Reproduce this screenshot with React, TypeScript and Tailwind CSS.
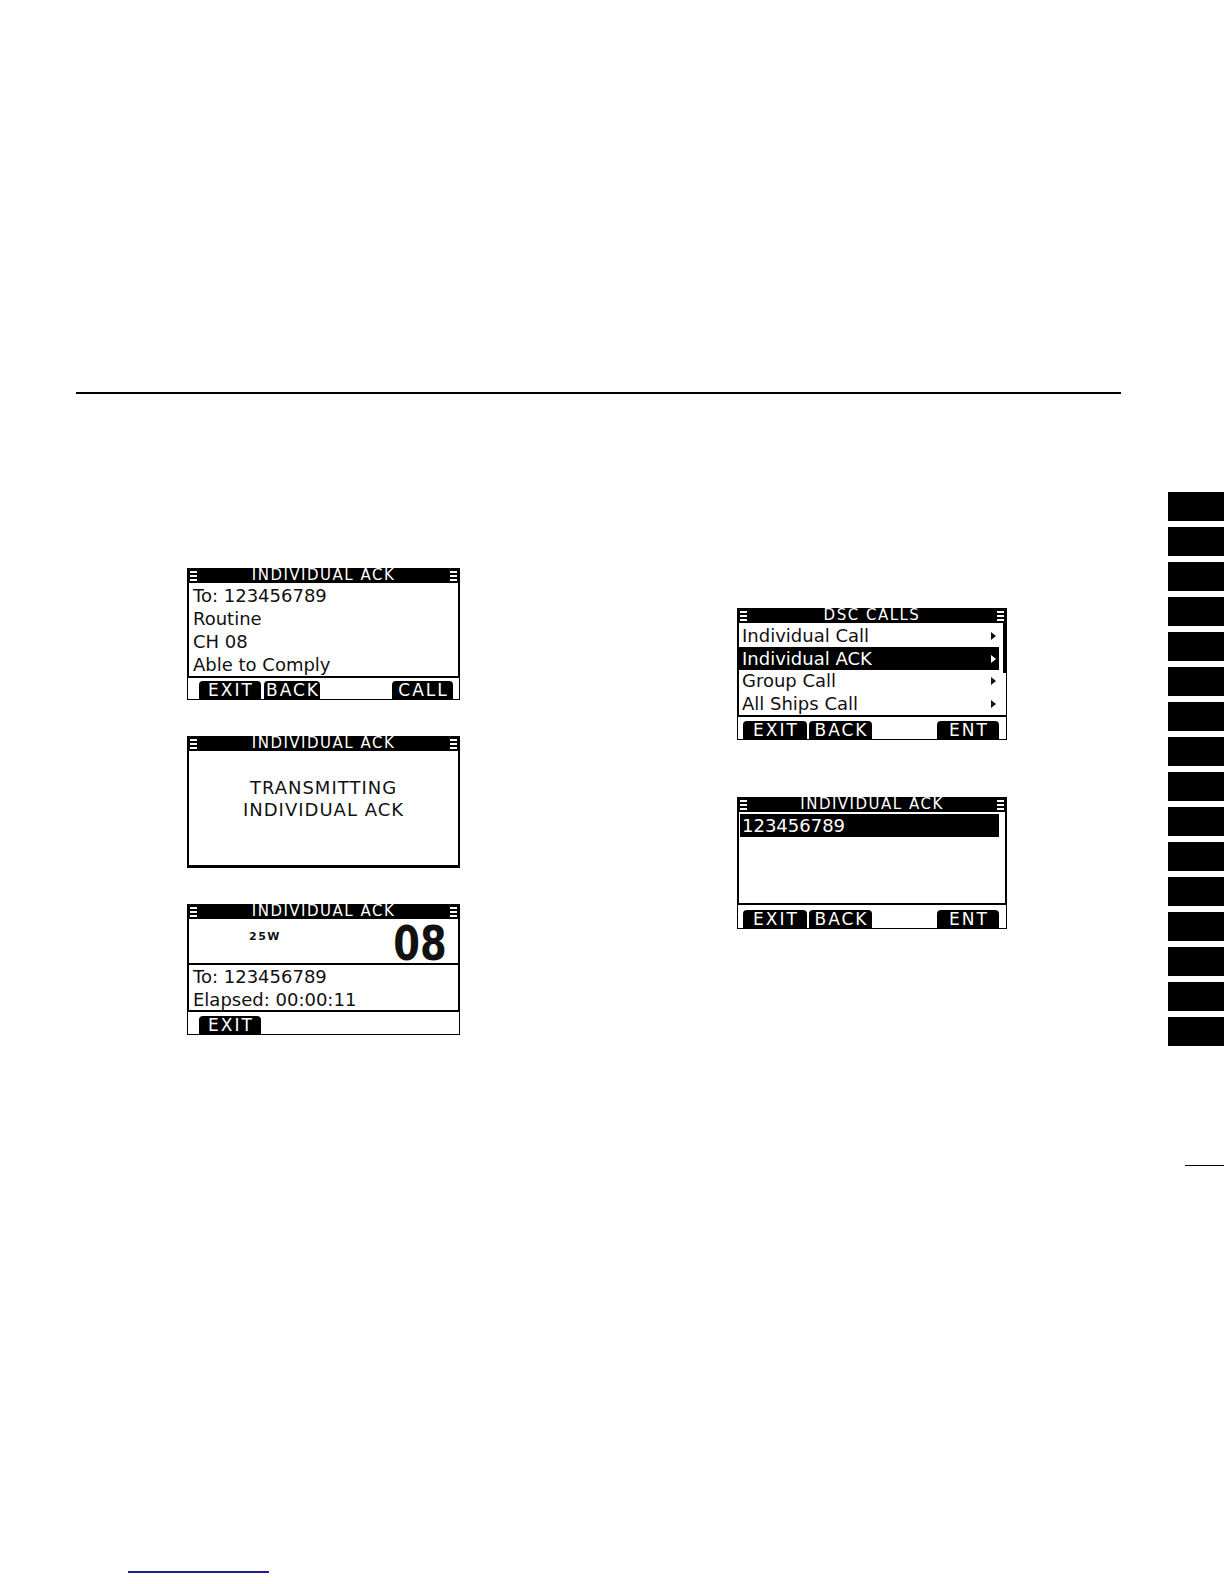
import type { ReactNode } from 'react'

const TABS = Array.from({ length: 16 }, (_, i) => i)

function MenuMark() {
  return (
    <svg width="7" height="10" viewBox="0 0 7 10" className="shrink-0">
      <rect x="0" y="0" width="7" height="2" fill="white" />
      <rect x="0" y="4" width="7" height="2" fill="white" />
      <rect x="0" y="8" width="7" height="2" fill="white" />
    </svg>
  )
}

function Arrow() {
  return (
    <svg width="5" height="8" viewBox="0 0 5 8" className="shrink-0">
      <path d="M0 0 L5 4 L0 8 Z" fill="currentColor" />
    </svg>
  )
}

function Header({ title }: { title: string }) {
  return (
    <div className="flex h-[15px] shrink-0 items-center justify-between bg-black px-[3px]">
      <MenuMark />
      <span className="text-[15px] leading-none tracking-[1.5px] text-white">{title}</span>
      <MenuMark />
    </div>
  )
}

function Key({ label, className }: { label: string; className: string }) {
  return (
    <div
      className={`flex h-[18px] items-center justify-center rounded-t-[4px] bg-black pl-[2px] text-[17px] leading-none tracking-[2px] text-white ${className}`}
    >
      {label}
    </div>
  )
}

function Screen({ children, wide = true }: { children: ReactNode; wide?: boolean }) {
  return (
    <div
      className={`flex h-[132px] flex-col font-['DejaVu_Sans',sans-serif] text-[#111] ${wide ? 'w-[273px]' : 'w-[270px]'}`}
    >
      {children}
    </div>
  )
}

export default function App() {
  return (
    <div className="flex h-[1584px] w-[1224px] overflow-hidden bg-white">
      {/* page body */}
      <div className="flex w-[1168px] shrink-0 flex-col">
        <div className="h-[392px]" />
        <div className="ml-[76px] h-[2px] w-[1045px] bg-black" />

        <div className="flex h-[1177px]">
          {/* left column of screens */}
          <div className="ml-[187px] flex flex-col gap-[36px] pt-[174px]">
            <Screen>
              <Header title="INDIVIDUAL ACK" />
              <div className="h-[95px] border-x-2 border-b-2 border-black pl-[4px] pt-[1px] text-[18px] leading-[23px]">
                <div>To: 123456789</div>
                <div>Routine</div>
                <div>CH 08</div>
                <div>Able to Comply</div>
              </div>
              <div className="flex h-[22px] items-end border-x border-b border-black pl-[11px] pr-[6px]">
                <Key label="EXIT" className="w-[62px]" />
                <Key label="BACK" className="ml-[3px] w-[56px]" />
                <Key label="CALL" className="ml-auto w-[61px]" />
              </div>
            </Screen>

            <Screen>
              <Header title="INDIVIDUAL ACK" />
              <div className="flex h-[117px] flex-col items-center border-x-2 border-b-[3px] border-black pt-[26px] text-[18px] leading-[22px] tracking-[1px]">
                <div>TRANSMITTING</div>
                <div>INDIVIDUAL ACK</div>
              </div>
            </Screen>

            <Screen>
              <Header title="INDIVIDUAL ACK" />
              <div className="flex h-[46px] items-start justify-between border-x-2 border-b-2 border-black">
                <span className="ml-[60px] mt-[12px] text-[11px] font-bold leading-none tracking-[1.5px]">25W</span>
                <span className="mr-[11px] origin-right scale-x-[0.8] text-[48px] font-bold leading-none">08</span>
              </div>
              <div className="h-[47px] border-x-2 border-b-2 border-black pl-[4px] text-[18px] leading-[23px]">
                <div>To: 123456789</div>
                <div>Elapsed: 00:00:11</div>
              </div>
              <div className="flex h-[23px] items-end border-x border-b border-black pl-[11px]">
                <Key label="EXIT" className="w-[62px]" />
              </div>
            </Screen>
          </div>

          {/* right column of screens */}
          <div className="ml-[277px] flex flex-col gap-[57px] pt-[214px]">
            <Screen wide={false}>
              <Header title="DSC CALLS" />
              <div className="flex h-[94px] border-b-2 border-l-2 border-black">
                <div className="flex-1 pt-[2px] text-[18px] leading-none">
                  <div className="mr-[4px] flex h-[22px] items-center justify-between pl-[3px] pr-[3px]">
                    <span>Individual Call</span>
                    <Arrow />
                  </div>
                  <div className="mr-[4px] flex h-[23px] items-center justify-between bg-black pl-[3px] pr-[3px] text-white">
                    <span>Individual ACK</span>
                    <Arrow />
                  </div>
                  <div className="mr-[4px] flex h-[22px] items-center justify-between pl-[3px] pr-[3px]">
                    <span>Group Call</span>
                    <Arrow />
                  </div>
                  <div className="mr-[4px] flex h-[23px] items-center justify-between pl-[3px] pr-[3px]">
                    <span>All Ships Call</span>
                    <Arrow />
                  </div>
                </div>
                <div className="flex w-[4px] flex-col items-end">
                  <div className="h-[50px] w-[4px] bg-black" />
                  <div className="w-[1px] flex-1 bg-black" />
                </div>
              </div>
              <div className="flex h-[23px] items-end border-x border-b border-black pl-[5px] pr-[7px]">
                <Key label="EXIT" className="w-[64px]" />
                <Key label="BACK" className="ml-[2px] w-[63px]" />
                <Key label="ENT" className="ml-auto w-[62px]" />
              </div>
            </Screen>

            <Screen wide={false}>
              <Header title="INDIVIDUAL ACK" />
              <div className="h-[93px] border-x-2 border-b-2 border-black pt-[2px]">
                <div className="ml-[1px] mr-[6px] flex h-[23px] items-center bg-black pl-[2px] text-[18px] leading-none text-white">
                  123456789
                </div>
              </div>
              <div className="flex h-[24px] items-end border-x border-b border-black pl-[5px] pr-[7px]">
                <Key label="EXIT" className="w-[64px]" />
                <Key label="BACK" className="ml-[2px] w-[63px]" />
                <Key label="ENT" className="ml-auto w-[62px]" />
              </div>
            </Screen>
          </div>
        </div>

        <div className="ml-[128px] h-[2px] w-[141px] bg-[#1f1f8f]" />
      </div>

      {/* thumb index */}
      <div className="flex w-[56px] shrink-0 flex-col pt-[492px]">
        <div className="flex flex-col gap-[6px]">
          {TABS.map(i => (
            <div key={i} className="h-[29px] bg-black" />
          ))}
        </div>
        <div className="ml-[17px] mt-[119px] h-[1px] w-[39px] bg-black" />
      </div>
    </div>
  )
}
